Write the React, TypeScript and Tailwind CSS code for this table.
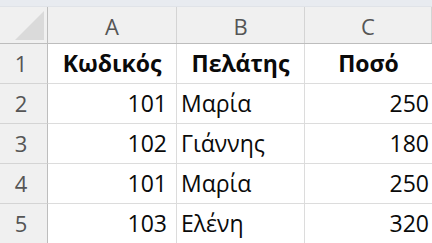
const cols = ["A", "B", "C"];

const rows = [
  { n: 1, a: "Κωδικός", b: "Πελάτης", c: "Ποσό", head: true },
  { n: 2, a: "101", b: "Μαρία", c: "250" },
  { n: 3, a: "102", b: "Γιάννης", c: "180" },
  { n: 4, a: "101", b: "Μαρία", c: "250" },
  { n: 5, a: "103", b: "Ελένη", c: "320" },
];

export default function App() {
  return (
    <div
      className="w-[432px] h-[243px] overflow-hidden bg-white text-[23px] text-[#0a0a0a]"
      style={{ fontFamily: "'Open Sans', 'Noto Sans', sans-serif" }}
    >
      {/* ribbon edge */}
      <div className="h-[7px] bg-[#e8ebf0] border-b border-[#e0e3e8]" />

      {/* column headers */}
      <div className="grid grid-cols-[48px_129px_128px_1fr] h-[37px] bg-[#f0f0f0] border-b border-[#bdbdbd] text-[#555] text-[22px]">
        <div className="flex items-end justify-end pr-[3px] pb-[3px] border-r border-[#bdbdbd]">
          <svg width="29" height="29" viewBox="0 0 29 29">
            <polygon points="29,0 29,29 0,29" fill="#dadada" />
          </svg>
        </div>
        {cols.map((c) => (
          <div key={c} className="flex items-center justify-center pt-[3px] border-r border-[#d4d4d4]">
            {c}
          </div>
        ))}
      </div>

      {/* rows */}
      {rows.map((r) => (
        <div key={r.n} className="grid grid-cols-[48px_129px_128px_1fr] h-[40px]">
          <div className="flex items-center justify-center pr-[5px] bg-[#f0f0f0] border-r border-b border-[#bdbdbd] border-b-[#d4d4d4] text-[#555] text-[22px]">
            {r.n}
          </div>
          {r.head ? (
            <>
              <div className="flex items-center justify-center font-bold border-r border-b border-[#dcdcdc]">{r.a}</div>
              <div className="flex items-center justify-center font-bold border-r border-b border-[#dcdcdc]">{r.b}</div>
              <div className="flex items-center justify-center font-bold border-b border-[#dcdcdc]">{r.c}</div>
            </>
          ) : (
            <>
              <div className="flex items-center justify-end pr-[9px] border-r border-b border-[#dcdcdc]">{r.a}</div>
              <div className="flex items-center pl-[4px] border-r border-b border-[#dcdcdc]">{r.b}</div>
              <div className="flex items-center justify-end pr-[3px] border-b border-[#dcdcdc]">{r.c}</div>
            </>
          )}
        </div>
      ))}
    </div>
  );
}
